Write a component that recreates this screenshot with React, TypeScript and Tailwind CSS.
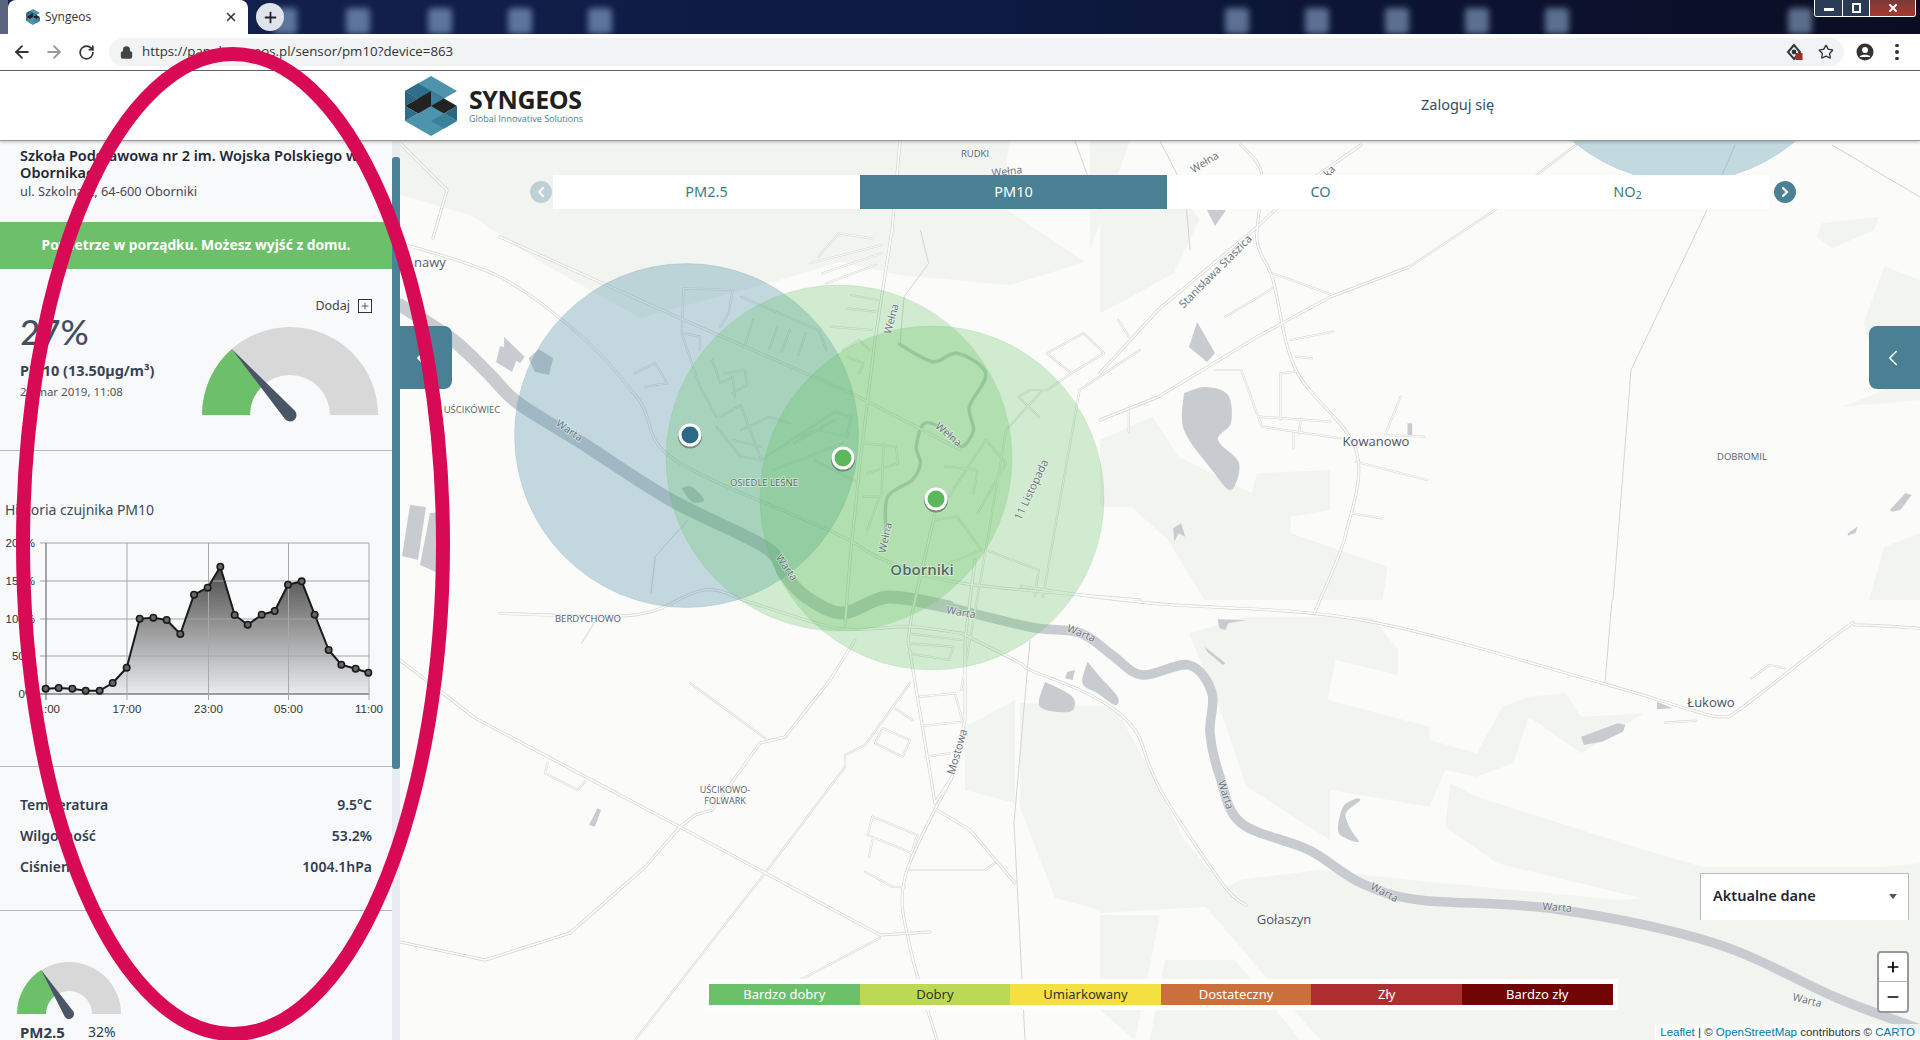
import React from "react";
import { ArrowLeft, ArrowRight, RotateCw, Lock, Star, Plus, X, ChevronLeft, ChevronRight, Minus } from "lucide-react";

type Z = (x: number, y: number) => [number, number];
const P: Z = (x, y) => [x, y];
const Z6: Z = (x, y) => [500 + x / 2.45, 230 + y / 3];
const Z10: Z = (x, y) => [400 + x / 2, 640 + y / 3];
const Z11: Z = (x, y) => [1100 + x / 1.912, 140 + y / 3];
const Z12: Z = (x, y) => [1100 + x / 1.912, 600 + y / 3];

function line(z: Z, n: number[], close = false) {
  let d = "";
  for (let i = 0; i < n.length; i += 2) {
    const [x, y] = z(n[i], n[i + 1]);
    d += (i ? "L" : "M") + x.toFixed(1) + " " + y.toFixed(1);
  }
  return d + (close ? "Z" : "");
}

function smooth(z: Z, n: number[]) {
  const p: [number, number][] = [];
  for (let i = 0; i < n.length; i += 2) p.push(z(n[i], n[i + 1]));
  let d = `M${p[0][0].toFixed(1)} ${p[0][1].toFixed(1)}`;
  for (let i = 0; i < p.length - 1; i++) {
    const a = p[Math.max(i - 1, 0)];
    const b = p[i];
    const c = p[i + 1];
    const e = p[Math.min(i + 2, p.length - 1)];
    const c1x = b[0] + (c[0] - a[0]) / 6;
    const c1y = b[1] + (c[1] - a[1]) / 6;
    const c2x = c[0] - (e[0] - b[0]) / 6;
    const c2y = c[1] - (e[1] - b[1]) / 6;
    d += `C${c1x.toFixed(1)} ${c1y.toFixed(1)} ${c2x.toFixed(1)} ${c2y.toFixed(1)} ${c[0].toFixed(1)} ${c[1].toFixed(1)}`;
  }
  return d;
}

const forests: string[] = [
  line(P, [400, 141, 1010, 141, 1000, 205, 1085, 262, 1010, 285, 900, 275, 840, 262, 780, 280, 640, 318, 540, 262, 470, 215, 400, 195], true),
  line(P, [1090, 141, 1130, 141, 1090, 250], true),
  line(P, [965, 727, 1015, 700, 1015, 803, 965, 790], true),
  line(P, [1020, 703, 1115, 707, 1150, 770, 1184, 840, 1240, 905, 1100, 913, 1100, 910, 1055, 898, 1020, 807], true),
  line(P, [1100, 915, 1160, 915, 1135, 1040, 1100, 1010], true),
  line(P, [1165, 960, 1235, 960, 1300, 1040, 1150, 1040], true),
  line(Z12, [280, 50, 520, 50, 570, 150, 570, 225, 450, 180, 435, 300, 630, 380, 630, 420, 720, 460, 770, 320, 820, 290, 890, 280, 920, 350, 1040, 340, 920, 460, 820, 350, 790, 490, 720, 530, 660, 510, 630, 620, 440, 570, 440, 720, 280, 560, 235, 350, 170, 100], true),
  line(Z12, [670, 550, 720, 590, 800, 630, 1000, 730, 1150, 800, 1500, 800, 1568, 790, 1568, 900, 1050, 900, 760, 790, 660, 680], true),
  line(P, [1320, 870, 1410, 880, 1620, 900, 1920, 880, 1920, 1040, 1320, 1040, 1200, 900, 1240, 880], true),
  line(Z11, [1500, 380, 1568, 420, 1568, 780, 1420, 800, 1500, 750, 1460, 550], true),
  line(Z11, [1380, 250, 1490, 230, 1480, 270, 1400, 325, 1370, 290], true),
  line(Z11, [1500, 1220, 1568, 1180, 1568, 1380, 1470, 1380], true),
  line(Z11, [0, 140, 130, 110, 190, 240, 140, 400, 60, 470, 0, 520], true),
  line(Z11, [0, 900, 100, 830, 150, 950, 290, 1060, 300, 1000, 440, 990, 440, 1110, 365, 1130, 365, 1180, 550, 1280, 540, 1380, 200, 1380, 130, 1200, 60, 1100, 0, 1100], true),
];

const water: string[] = [
  smooth(P, [1184, 393, 1205, 387, 1228, 395, 1231, 423, 1218, 440, 1239, 463, 1231, 490, 1212, 470, 1184, 430, 1184, 393]),
  line(P, [1197, 322, 1215, 353, 1207, 362, 1189, 347], true),
  line(P, [1207, 210, 1226, 210, 1215, 226], true),
  line(Z6, [70, 385, 95, 358, 130, 385, 120, 435, 85, 425], true),
  smooth(Z6, [445, 775, 470, 770, 500, 810, 470, 815, 445, 775]),
  line(P, [410, 505, 426, 507, 418, 560, 402, 556], true),
  line(P, [430, 513, 445, 512, 436, 572, 420, 565], true),
  line(P, [500, 346, 520, 352, 512, 372, 496, 362], true),
  smooth(Z10, [1290, 125, 1345, 170, 1340, 215, 1280, 200, 1290, 125]),
  smooth(Z10, [1375, 65, 1400, 110, 1435, 170, 1430, 195, 1395, 160, 1365, 130, 1375, 65]),
  line(Z10, [1335, 95, 1350, 90, 1345, 120, 1330, 115], true),
  line(Z10, [395, 505, 402, 510, 390, 560, 378, 555], true),
  line(Z12, [225, 58, 280, 60, 245, 70, 240, 90, 228, 85], true),
  line(Z12, [200, 140, 240, 190, 235, 195, 205, 155], true),
  smooth(Z12, [490, 595, 465, 620, 455, 690, 470, 715, 495, 725, 480, 690, 470, 640, 497, 602, 490, 595]),
  line(Z12, [920, 410, 990, 370, 1005, 375, 1000, 395, 960, 425, 925, 435], true),
  line(Z12, [1065, 305, 1095, 325, 1065, 328], true),
  line(Z11, [140, 1165, 155, 1150, 163, 1190, 150, 1180, 142, 1205], true),
  line(Z11, [1510, 1110, 1540, 1060, 1552, 1065, 1530, 1110, 1515, 1115], true),
  line(Z11, [1430, 1180, 1448, 1160, 1445, 1178, 1430, 1187], true),
  line(Z11, [588, 850, 597, 850, 597, 890, 588, 888], true),
  line(Z6, [10, 320, 60, 380, 50, 400, 10, 370], true),
];

const riverWest = smooth(P, [400, 305, 453, 340, 490, 375, 518, 403, 582, 443, 671, 500, 765, 547, 785, 575, 806, 597, 843, 613, 888, 597, 949, 607]);
const riverEast = smooth(P, [949, 607, 1030, 627, 1080, 633, 1112, 655, 1142, 675, 1189, 665, 1212, 693, 1210, 733, 1220, 777, 1241, 823, 1309, 850, 1361, 883, 1420, 900, 1555, 909, 1714, 943, 1837, 998, 1920, 1029]);
const wetna = smooth(Z6, [975, 340, 1060, 395, 1120, 370, 1190, 430, 1150, 530, 1160, 600, 1130, 650, 1090, 600, 1040, 580, 1020, 650, 1030, 700, 1010, 750, 950, 800, 945, 900]);

const major: string[] = [
  smooth(Z6, [0, 1150, 330, 1155, 500, 1080, 620, 1120, 830, 1195, 1000, 1190, 1130, 1210]),
  smooth(P, [961, 633, 1018, 662, 1030, 670, 1080, 690, 1115, 710, 1137, 733, 1150, 767, 1168, 803, 1225, 887, 1246, 905]),
  smooth(Z12, [-150, -40, 100, 10, 500, 60, 960, 250, 1130, 330, 1190, 350, 1230, 320, 1420, 90, 1450, 75, 1568, 85]),
  line(P, [892, 230, 875, 340, 860, 463, 850, 560, 845, 625]),
  line(P, [900, 141, 892, 230]),
  line(P, [935, 513, 912, 613, 908, 640, 935, 803, 952, 777, 965, 720, 965, 640, 975, 560]),
  smooth(P, [952, 777, 905, 877, 910, 947, 937, 1040]),
  line(P, [500, 237, 684, 320, 851, 393, 961, 450]),
  smooth(P, [400, 243, 500, 277, 582, 337, 639, 400, 675, 460, 835, 533, 884, 560, 961, 583, 1140, 600]),
  line(P, [400, 660, 475, 718, 680, 827, 880, 935, 930, 932]),
  line(P, [400, 942, 485, 960, 570, 933, 645, 867, 680, 827, 695, 815, 712, 810, 760, 743, 785, 737, 830, 680, 855, 640]),
  line(P, [1100, 373, 1158, 310, 1257, 227, 1296, 190, 1361, 145]),
  smooth(P, [1241, 145, 1262, 175, 1257, 240, 1273, 280, 1296, 370, 1356, 450, 1346, 533, 1320, 600, 1314, 613]),
  line(P, [1100, 420, 1158, 397, 1257, 337, 1330, 297, 1409, 267]),
  line(P, [937, 810, 970, 830, 1015, 883]),
  line(P, [400, 143, 447, 190, 433, 238]),
];

const minor: string[] = [
  line(P, [1409, 267, 1495, 210, 1539, 173, 1576, 145]),
  line(P, [690, 683, 765, 738]),
  line(P, [635, 1040, 765, 873, 845, 767, 845, 755, 865, 745, 910, 683]),
  line(P, [800, 980, 880, 938]),
  line(P, [910, 870, 985, 870, 995, 863]),
  line(Z10, [295, 370, 290, 400, 355, 450, 370, 425]),
  line(Z10, [945, 530, 935, 585, 1025, 640]),
  line(Z10, [945, 530, 1035, 585, 1020, 650]),
  line(Z10, [945, 600, 938, 650]),
  line(Z10, [930, 695, 985, 740, 1010, 742]),
  line(Z10, [1040, 170, 1110, 160, 1125, 245, 1045, 258]),
  line(Z10, [1050, 350, 1100, 340]),
  line(Z10, [965, 265, 1020, 300, 1005, 350, 950, 310, 965, 265]),
  line(Z10, [985, 200, 1025, 240]),
  line(Z11, [330, 400, 445, 465]),
  line(Z11, [240, 530, 330, 445]),
  line(Z11, [365, 600, 445, 575]),
  line(Z11, [375, 650, 405, 655]),
  line(Z11, [220, 690, 270, 690, 300, 820, 310, 860, 460, 895]),
  line(Z11, [345, 840, 345, 700, 375, 695]),
  line(Z11, [305, 830, 440, 845]),
  line(Z11, [385, 835, 380, 880]),
  line(Z11, [490, 965, 625, 1020]),
  line(Z11, [480, 1120, 540, 1135]),
  line(Z11, [575, 770, 545, 885]),
  line(Z11, [545, 885, 620, 890]),
  line(Z11, [35, 540, 55, 590]),
  line(Z11, [55, 810, 55, 875]),
  line(Z11, [370, 880, 370, 925]),
  line(Z12, [1080, 368, 1140, 362]),
  line(Z12, [1245, 235, 1280, 195, 1310, 205]),
  line(Z6, [450, 175, 570, 180, 560, 250, 540, 290]),
  line(Z6, [450, 175, 445, 310, 490, 470, 530, 560]),
  line(Z6, [590, 200, 780, 300, 800, 360]),
  line(Z6, [450, 310, 490, 320, 490, 360]),
  line(Z6, [330, 430, 380, 400, 410, 460, 355, 470]),
  line(Z6, [520, 390, 540, 460, 570, 440, 575, 500]),
  line(Z6, [550, 430, 600, 420, 605, 465, 570, 490]),
  line(Z6, [620, 270, 600, 345]),
  line(Z6, [680, 290, 660, 355]),
  line(Z6, [710, 300, 690, 365]),
  line(Z6, [750, 310, 730, 375]),
  line(Z6, [540, 560, 590, 525, 640, 690, 590, 680, 530, 590]),
  line(Z6, [590, 600, 660, 560, 710, 580]),
  line(Z6, [570, 630, 640, 650]),
  line(Z6, [640, 690, 820, 545, 860, 560, 850, 620, 780, 600, 730, 620]),
  line(Z6, [720, 640, 820, 570]),
  line(Z6, [670, 720, 840, 640]),
  line(Z6, [770, 690, 880, 760]),
  line(Z6, [760, 100, 935, 45]),
  line(Z6, [790, 130, 935, 70]),
  line(Z6, [780, 80, 830, 10, 910, 25]),
  line(Z6, [800, 160, 920, 105]),
  line(Z6, [860, 195, 925, 210]),
  line(Z6, [850, 235, 920, 245]),
  line(Z6, [810, 290, 910, 300]),
  line(Z6, [840, 360, 880, 330, 905, 360]),
  line(Z6, [850, 380, 890, 400, 880, 430]),
  line(Z6, [890, 640, 970, 650, 975, 700, 900, 730]),
  line(Z6, [940, 640, 935, 790]),
  line(Z6, [890, 800, 930, 800, 900, 900]),
  line(Z6, [1090, 710, 1170, 720, 1160, 790]),
  line(Z6, [1100, 800, 1190, 630, 1240, 700, 1170, 850]),
  line(Z6, [1060, 870, 1120, 860, 1180, 960, 1100, 1000]),
  line(Z6, [1340, 370, 1430, 310, 1480, 370, 1400, 430, 1340, 370]),
  line(Z6, [1400, 430, 1340, 480, 1300, 480, 1270, 500, 1320, 560]),
  line(Z6, [1000, 1210, 1130, 1230]),
  line(Z6, [1000, 1240, 1110, 1250, 1100, 1290, 1000, 1270]),
  line(Z6, [1190, 960, 1320, 1020, 1310, 1100]),
  line(Z6, [1330, 480, 1240, 600, 1190, 960, 1130, 1380]),
  line(Z6, [1420, 480, 1568, 360]),
  line(Z6, [1420, 480, 1330, 1100]),
];

const thin: string[] = [
  line(P, [1613, 600, 1631, 370, 1707, 210, 1735, 145]),
  line(P, [1612, 600, 1605, 683]),
  line(P, [1832, 145, 1920, 197]),
  line(P, [1030, 640, 1014, 823, 1025, 1040]),
  line(Z6, [370, 1090, 380, 980, 460, 870]),
  line(Z6, [200, 1240, 240, 1160]),
  line(Z6, [980, 340, 990, 200, 1050, 100, 1030, 0]),
  line(P, [1075, 141, 1100, 210]),
  line(P, [1160, 141, 1185, 190, 1190, 250]),
];

type L = { t: string; x: number; y: number; r?: number; s?: number; c?: string; w?: number };
const labels: L[] = [
  { t: "Warta", x: 569, y: 431, r: 35 },
  { t: "Warta", x: 786, y: 568, r: 55 },
  { t: "Warta", x: 961, y: 613, r: 10 },
  { t: "Warta", x: 1081, y: 634, r: 22 },
  { t: "Warta", x: 1225, y: 795, r: 72 },
  { t: "Warta", x: 1384, y: 893, r: 28 },
  { t: "Warta", x: 1557, y: 908, r: 4 },
  { t: "Warta", x: 1807, y: 1001, r: 14 },
  { t: "Wełna", x: 892, y: 319, r: -75 },
  { t: "Wełna", x: 948, y: 435, r: 40 },
  { t: "Wełna", x: 886, y: 538, r: -78 },
  { t: "Wełna", x: 1007, y: 172, r: -6 },
  { t: "Wełna", x: 1205, y: 163, r: -32 },
  { t: "ka", x: 1330, y: 172, r: -45 },
  { t: "Stanisława Staszica", x: 1216, y: 272, r: -45, s: 11 },
  { t: "11 Listopada", x: 1032, y: 490, r: -65, s: 11 },
  { t: "Mostowa", x: 958, y: 752, r: -74, s: 11 },
  { t: "Oborniki", x: 922, y: 571, s: 15, c: "#4f6a62", w: 600 },
  { t: "Kowanowo", x: 1376, y: 443, s: 13, c: "#4a5563" },
  { t: "Łukowo", x: 1711, y: 704, s: 13, c: "#4a5563" },
  { t: "Gołaszyn", x: 1284, y: 921, s: 13, c: "#4a5563" },
  { t: "DOBROMIL", x: 1742, y: 457, s: 9.5, c: "#55606e" },
  { t: "BERDYCHOWO", x: 588, y: 619, s: 9.5, c: "#55606e" },
  { t: "OSIEDLE LEŚNE", x: 764, y: 483, s: 9.5, c: "#4f6a62" },
  { t: "UŚCIKÓWIEC", x: 472, y: 410, s: 9.5, c: "#55606e" },
  { t: "UŚCIKOWO-", x: 725, y: 791, s: 9, c: "#55606e" },
  { t: "FOLWARK", x: 725, y: 802, s: 9, c: "#55606e" },
  { t: "RUDKI", x: 975, y: 154, s: 9.5, c: "#55606e" },
  { t: "nawy", x: 430, y: 264, s: 13, c: "#555f6b" },
];

function MapCanvas() {
  return (
    <svg className="absolute inset-0 w-full h-full" viewBox="400 141 1520 899" preserveAspectRatio="none">
      <rect x="400" y="141" width="1520" height="899" fill="#fbfbfa" />
      {forests.map((d, i) => <path key={i} d={d} fill="#f2f4f0" />)}
      {water.map((d, i) => <path key={i} d={d} fill="#c8ccd1" />)}
      <path d={riverWest} fill="none" stroke="#c8ccd1" strokeWidth="13" strokeLinecap="round" />
      <path d={riverEast} fill="none" stroke="#c8ccd1" strokeWidth="9.5" strokeLinecap="round" />
      <path d={wetna} fill="none" stroke="#c8ccd1" strokeWidth="3.5" />
      <g fill="none" stroke="#d4d5d4" strokeWidth="1" strokeLinejoin="round">
        {thin.map((d, i) => <path key={i} d={d} />)}
      </g>
      <g fill="none" stroke="#d3d4d3" strokeWidth="3" strokeLinejoin="round" strokeLinecap="round">
        {major.map((d, i) => <path key={i} d={d} />)}
      </g>
      <g fill="none" stroke="#d9dad9" strokeWidth="2.2" strokeLinejoin="round" strokeLinecap="round">
        {minor.map((d, i) => <path key={i} d={d} />)}
      </g>
      <g fill="none" stroke="#fcfcfb" strokeWidth="1.7" strokeLinejoin="round" strokeLinecap="round">
        {major.map((d, i) => <path key={i} d={d} />)}
      </g>
      <g fill="none" stroke="#fcfcfb" strokeWidth="1" strokeLinejoin="round" strokeLinecap="round">
        {minor.map((d, i) => <path key={i} d={d} />)}
      </g>
      <circle cx="1684" cy="10" r="172" fill="#4a93a8" fillOpacity="0.32" stroke="#4a93a8" strokeOpacity="0.15" />
      <circle cx="686.5" cy="435.5" r="172" fill="#4a8fa5" fillOpacity="0.32" stroke="#3f7f96" strokeOpacity="0.15" />
      <circle cx="839" cy="458" r="173" fill="#62c360" fillOpacity="0.28" stroke="#5fbb5d" strokeOpacity="0.15" />
      <circle cx="932" cy="498" r="172" fill="#62c360" fillOpacity="0.28" stroke="#5fbb5d" strokeOpacity="0.15" />
      <g fontFamily="'Open Sans', sans-serif" textAnchor="middle" dominantBaseline="middle">
        {labels.map((l, i) => (
          <text
            key={i}
            x={l.x}
            y={l.y}
            fontSize={l.s ?? 10.5}
            fill={l.c ?? "#65707c"}
            fontWeight={l.w ?? 400}
            transform={l.r ? `rotate(${l.r} ${l.x} ${l.y})` : undefined}
            stroke="#fbfbf9"
            strokeOpacity="0.6"
            strokeWidth="1.5"
            paintOrder="stroke"
          >
            {l.t}
          </text>
        ))}
      </g>
      {[
        [690, 435, "#2b6a85"],
        [843, 458, "#5cb85a"],
        [936, 499, "#5cb85a"],
      ].map(([x, y, c], i) => (
        <g key={i}>
          <circle cx={x as number} cy={(y as number) + 1.5} r="12" fill="#333" fillOpacity="0.45" />
          <circle cx={x as number} cy={y as number} r="11.5" fill="#fff" />
          <circle cx={x as number} cy={y as number} r="8.5" fill={c as string} />
        </g>
      ))}
    </svg>
  );
}

function Gauge({ w, h, r, inner, pct, stem }: { w: number; h: number; r: number; inner: number; pct: number; stem: number }) {
  const a = Math.PI * (pct / 100);
  const cx = r;
  const cy = r;
  const ox = cx - r * Math.cos(a);
  const oy = cy - r * Math.sin(a);
  const ix = cx - inner * Math.cos(a);
  const iy = cy - inner * Math.sin(a);
  const nx = Math.sin(a) * stem;
  const ny = -Math.cos(a) * stem;
  return (
    <svg width={w} height={h} viewBox={`0 0 ${w} ${h}`} className="block overflow-visible">
      <path d={`M0 ${cy}A${r} ${r} 0 0 1 ${2 * r} ${cy}L${cx + inner} ${cy}A${inner} ${inner} 0 0 0 ${cx - inner} ${cy}Z`} fill="#d8d8d8" />
      <path d={`M0 ${cy}A${r} ${r} 0 0 1 ${ox} ${oy}L${ix} ${iy}A${inner} ${inner} 0 0 0 ${cx - inner} ${cy}Z`} fill="#6cc06a" />
      <path d={`M${ox} ${oy}L${cx + nx} ${cy + ny}A${stem} ${stem} 0 1 1 ${cx - nx} ${cy - ny}Z`} fill="#4a5568" />
    </svg>
  );
}

const pts = [[137,626],[176,624],[217,626],[257,632],[299,632],[338,609],[380,563],[419,416],[460,413],[500,420],[541,462],[582,344],[623,323],[661,260],[704,405],[743,434],[785,404],[824,393],[864,314],[905,304],[944,404],[986,510],[1024,554],[1067,566],[1105,578]].map(([x, y]) => [x / 3, y / 3 - 63 + 20]);

function HistoryChart() {
  const top = 20;
  const ys = [20, 58, 96, 133, 171];
  const xs = [46, 127, 208.5, 288.5, 369];
  const d = pts.map((p, i) => (i ? "L" : "M") + p[0].toFixed(1) + " " + p[1].toFixed(1)).join("");
  const area = d + `L369 171L46 171Z`;
  const yl = ["200%", "150%", "100%", "50%", "0%"];
  const xl = ["11:00", "17:00", "23:00", "05:00", "11:00"];
  return (
    <svg width="392" height="205" viewBox="0 0 392 205" className="block">
      <defs>
        <linearGradient id="hist" x1="0" y1="0" x2="0" y2="1">
          <stop offset="0" stopColor="#4a4a4a" />
          <stop offset="1" stopColor="#4a4a4a" stopOpacity="0.08" />
        </linearGradient>
      </defs>
      <path d={area} fill="url(#hist)" />
      {ys.map((y, i) => <line key={i} x1="40" x2="369" y1={y} y2={y} stroke={i === 4 ? "#444" : "#a5a5a5"} strokeWidth="1" />)}
      {xs.map((x, i) => <line key={i} x1={x} x2={x} y1={top} y2="177" stroke={i === 0 ? "#555" : "#a9a9a9"} strokeWidth="1" />)}
      <path d={d} fill="none" stroke="#1a1a1a" strokeWidth="2" strokeLinejoin="round" />
      {pts.map((p, i) => <circle key={i} cx={p[0]} cy={p[1]} r="3.2" fill="#666" stroke="#1a1a1a" strokeWidth="1.6" />)}
      <g fontFamily="'Liberation Sans', sans-serif" fontSize="11.5" fill="#333">
        {yl.map((t, i) => <text key={i} x="35" y={ys[i] + 4} textAnchor="end">{t}</text>)}
        {xl.map((t, i) => <text key={i} x={xs[i]} y="190" textAnchor="middle">{t}</text>)}
      </g>
    </svg>
  );
}

function Logo({ className }: { className?: string }) {
  return (
    <svg viewBox="0 0 52 60" className={className}>
      <polygon points="26,0 52,15 26,30 0,15" fill="#4d93ab" />
      <polygon points="0,15 13,7.5 26,15 13,22.5" fill="#2f6d8a" />
      <polygon points="0,15 13,22.5 0,30" fill="#2c6580" />
      <polygon points="0,30 26,15 52,30 26,45" fill="#222" />
      <polygon points="26,15 39,22.5 26,30" fill="#3c7f9a" />
      <polygon points="52,30 52,45 39,37.5" fill="#2c6580" />
      <polygon points="0,45 26,30 52,45 26,60" fill="#4d93ab" />
      <polygon points="26,45 39,37.5 52,45 39,52.5" fill="#3c7f9a" />
      <polygon points="0,30 13,37.5 0,45" fill="#2f6d8a" />
    </svg>
  );
}

function TabStrip() {
  const tiles = [285, 358, 440, 520, 600, 1237, 1317, 1397, 1477, 1557, 1800];
  return (
    <div className="relative h-[34px] shrink-0 overflow-hidden bg-[#0d1330] flex items-end">
      <div className="absolute inset-0 bg-gradient-to-r from-[#13224f] via-[#0d1a42] to-[#0a0d22]" />
      {tiles.map((x) => (
        <div key={x} className="absolute top-[8px] w-[24px] h-[26px] rounded-sm bg-[#9dbbe0] opacity-55 blur-[3px]" style={{ left: x - 12 }} />
      ))}
      <div className="relative w-[8px] h-full bg-[#59647e]" />
      <div className="relative w-[240px] h-full bg-white rounded-t-lg flex items-center pl-[18px] pr-[10px]">
        <Logo className="w-[14px] h-[16px]" />
        <span className="ml-[4px] pl-[1px] text-[12px] text-[#333] font-['Open_Sans',sans-serif] flex-1">Syngeos</span>
        <X size={14} strokeWidth={2.5} className="text-[#333]" />
      </div>
      <div className="relative ml-[8px] mb-[3px] w-[28px] h-[28px] rounded-full bg-[#dfe3ec] flex items-center justify-center">
        <Plus size={17} strokeWidth={2.5} className="text-[#222]" />
      </div>
      <div className="absolute right-[4px] top-0 w-[102px] h-[17px] flex border border-t-0 border-white rounded-b-[3px] overflow-hidden">
        <div className="w-[28px] h-full bg-[#2b3a55] border-r border-white flex items-center justify-center">
          <div className="w-[10px] h-[3px] bg-white mt-[3px]" />
        </div>
        <div className="w-[27px] h-full bg-[#2b3a55] border-r border-white flex items-center justify-center">
          <div className="w-[9px] h-[10px] border-2 border-white" />
        </div>
        <div className="flex-1 h-full bg-gradient-to-b from-[#7a3a36] to-[#a8382c] flex items-center justify-center">
          <X size={12} strokeWidth={4} className="text-white" />
        </div>
      </div>
    </div>
  );
}

function Toolbar() {
  return (
    <div className="h-[37px] shrink-0 bg-white border-b border-[#666] flex items-center pl-[12px] pr-[12px]">
      <ArrowLeft size={20} strokeWidth={2.2} className="text-[#333]" />
      <ArrowRight size={20} strokeWidth={2.2} className="text-[#999] ml-[12px]" />
      <RotateCw size={17} strokeWidth={2.4} className="text-[#333] ml-[14px]" />
      <div className="ml-[14px] w-[1735px] h-[28px] rounded-full bg-[#f1f3f4] flex items-center pl-[11px] pr-[10px]">
        <Lock size={13} strokeWidth={3} fill="#444" className="text-[#444]" />
        <span className="ml-[9px] flex-1 text-[13.3px] text-[#333] font-['Open_Sans',sans-serif]">https://panel.syngeos.pl/sensor/pm10?device=863</span>
        <svg width="18" height="18" viewBox="0 0 18 18" className="mr-[14px]">
          <path d="M8 2 L2 9 L8 16 L14 9Z" fill="none" stroke="#333" strokeWidth="2" />
          <circle cx="8" cy="9" r="2.4" fill="#333" />
          <rect x="9.5" y="10" width="7" height="7" fill="#a12a2a" />
        </svg>
        <Star size={16} strokeWidth={2} className="text-[#333]" />
      </div>
      <svg width="18" height="18" viewBox="0 0 18 18" className="ml-[12px]">
        <circle cx="9" cy="9" r="8.5" fill="#333" />
        <circle cx="9" cy="7" r="3" fill="#fff" />
        <path d="M3.8 13.5 C5 11 13 11 14.2 13.5 L14.2 14 L3.8 14Z" fill="#fff" />
      </svg>
      <div className="ml-[21px] flex flex-col gap-[3px]">
        <span className="block w-[3.5px] h-[3.5px] rounded-full bg-[#333]" />
        <span className="block w-[3.5px] h-[3.5px] rounded-full bg-[#333]" />
        <span className="block w-[3.5px] h-[3.5px] rounded-full bg-[#333]" />
      </div>
    </div>
  );
}

function Header() {
  return (
    <div className="relative z-20 h-[70px] shrink-0 bg-white border-b border-[#999] shadow-[0_1px_3px_rgba(0,0,0,0.25)] flex items-center">
      <div className="ml-[405px] w-[52px] h-[60px]"><Logo className="w-[52px] h-[60px]" /></div>
      <div className="ml-[12px] w-[120px]">
        <div className="text-[25px] leading-[22px] font-bold text-[#1f1f1f] font-['Open_Sans',sans-serif] tracking-[-0.4px]">SYNGEOS</div>
        <div className="text-[9px] leading-[10px] text-[#3f7d8d] font-['Open_Sans',sans-serif] mt-[4px]">Global Innovative Solutions</div>
      </div>
      <div className="ml-[832px] mb-[4px] text-[14.5px] leading-[20px] text-[#2f4f5f] font-['Noto_Sans',sans-serif]">Zaloguj się</div>
    </div>
  );
}

function Sidebar() {
  return (
    <div className="relative w-[400px] shrink-0 flex bg-[#f8f9fb] font-['Noto_Sans',sans-serif] text-[#333d4d]">
      <div className="w-[392px] overflow-hidden">
        <section className="h-[81px] pl-[20px] pr-[16px] pt-[6px]">
          <h1 className="text-[14.5px] leading-[17px] font-semibold text-[#1f2733]">Szkoła Podstawowa nr 2 im. Wojska Polskiego w Obornikach</h1>
          <p className="mt-[1px] text-[12.75px] leading-[18px] text-[#3f4a5a]">ul. Szkolna 2, 64-600 Oborniki</p>
        </section>
        <div className="h-[47px] bg-[#6cc06a] flex items-center justify-center text-white text-[13.8px] font-bold">Powietrze w porządku. Możesz wyjść z domu.</div>
        <section className="relative h-[182px] border-b border-[#bbb] pl-[20px] pt-[44px]">
          <div className="absolute right-[20px] top-[28px] flex items-center text-[12.5px] text-[#444]">
            Dodaj
            <span className="ml-[8px] w-[14px] h-[14px] border border-[#333] flex items-center justify-center"><Plus size={10} strokeWidth={2} /></span>
          </div>
          <div className="text-[35px] leading-[36px] font-medium font-['Lato',sans-serif] text-[#434e5f]">27%</div>
          <div className="mt-[10.5px] text-[14.5px] leading-[20px] font-bold text-[#3a4454]">PM10 (13.50µg/m³)</div>
          <div className="mt-[2px] text-[11.5px] leading-[20px] text-[#555]">21 mar 2019, 11:08</div>
          <div className="absolute left-[202px] top-[58px]">
            <Gauge w={176} h={96} r={88} inner={40} pct={27} stem={6.5} />
          </div>
        </section>
        <section className="h-[316px] border-b border-[#bbb] relative">
          <div className="absolute left-[5px] top-[49px] text-[14px] leading-[20px] text-[#3f4a5a]">Historia czujnika PM10</div>
          <div className="pt-[72px]"><HistoryChart /></div>
        </section>
        <section className="h-[144px] pl-[20px] pr-[20px] pt-[28px] flex flex-col gap-[11px] border-b border-[#bbb] text-[14px] leading-[20px] font-semibold">
          <div className="flex justify-between"><span>Temperatura</span><span>9.5°C</span></div>
          <div className="flex justify-between"><span>Wilgotność</span><span>53.2%</span></div>
          <div className="flex justify-between"><span>Ciśnienie</span><span>1004.1hPa</span></div>
        </section>
        <section className="relative pl-[17px] pt-[51px]">
          <Gauge w={104} h={58} r={52} inner={23} pct={32} stem={5} />
          <div className="flex items-center pl-[3px] mt-[2px]">
            <span className="text-[15px] leading-[20px] font-bold w-[68px]">PM2.5</span>
            <span className="text-[14px] leading-[20px]">32%</span>
          </div>
        </section>
      </div>
      <div className="w-[8px] bg-[#e9ebf3] pt-[16px]">
        <div className="h-[612px] rounded-[3px] bg-[#4a8398]" />
      </div>
    </div>
  );
}

const legend = [
  ["Bardzo dobry", "bg-[#6cc06a] text-white"],
  ["Dobry", "bg-[#bcd955] text-[#333]"],
  ["Umiarkowany", "bg-[#f4e041] text-[#333]"],
  ["Dostateczny", "bg-[#c9703c] text-white"],
  ["Zły", "bg-[#ad2e2e] text-white"],
  ["Bardzo zły", "bg-[#700505] text-white"],
];

const tabs = ["PM2.5", "PM10", "CO"];

function MapPane() {
  return (
    <div className="relative flex-1 overflow-hidden font-['Noto_Sans',sans-serif]">
      <MapCanvas />
      <button className="absolute left-0 top-[185px] w-[52px] h-[63px] rounded-r-lg bg-[#4a8093] flex items-center pl-[10px] text-white">
        <ChevronLeft size={22} strokeWidth={2.5} />
      </button>
      <div className="absolute right-0 top-[185px] w-[51px] h-[63px] rounded-l-lg bg-[#4a8093] flex items-center pl-[11px] text-white">
        <ChevronLeft size={26} strokeWidth={1.4} />
      </div>
      <div className="absolute left-[130px] top-[34px] flex items-center">
        <span className="w-[22px] h-[22px] rounded-full bg-[#4a8093] opacity-30 flex items-center justify-center text-white"><ChevronLeft size={16} strokeWidth={3.5} /></span>
        <div className="ml-[1px] w-[1216px] h-[34px] overflow-hidden flex bg-white">
          {tabs.map((t) => (
            <div key={t} className={t === "PM10" ? "w-[307px] shrink-0 bg-[#4a8093] text-white text-[14.5px] flex items-center justify-center" : "w-[307px] shrink-0 text-[#3a7a85] text-[14.5px] flex items-center justify-center"}>{t}</div>
          ))}
          <div className="w-[307px] shrink-0 text-[#3a7a85] text-[14.5px] flex items-center justify-center">NO<sub className="text-[11px] leading-none">2</sub></div>
        </div>
        <span className="ml-[5px] w-[22px] h-[22px] rounded-full bg-[#4a8093] flex items-center justify-center text-white"><ChevronRight size={16} strokeWidth={3.5} /></span>
      </div>
      <div className="absolute left-[304px] bottom-[30px] flex bg-white p-[5px]">
        {legend.map(([t, c]) => (
          <div key={t} className={`w-[150.6px] h-[21px] flex items-center justify-center text-[13px] ${c}`}>{t}</div>
        ))}
      </div>
      <div className="absolute right-[11px] bottom-[120px] w-[209px] h-[47px] bg-white border border-b-0 border-[#bbb] flex items-center justify-between pl-[12px] pr-[11px] pb-[2px]">
        <span className="text-[14.5px] font-semibold text-[#1f2733]">Aktualne dane</span>
        <span className="w-0 h-0 border-x-[4px] border-x-transparent border-t-[5px] border-t-[#555]" />
      </div>
      <div className="absolute right-[11px] bottom-[27px] w-[32px] h-[62px] bg-white rounded-[4px] border-2 border-[#999] flex flex-col">
        <div className="h-[29px] flex items-center justify-center border-b border-[#bbb]"><Plus size={16} strokeWidth={2.6} className="text-black" /></div>
        <div className="flex-1 flex items-center justify-center"><Minus size={16} strokeWidth={2.6} className="text-black" /></div>
      </div>
      <div className="absolute right-0 bottom-0 h-[16px] pl-[5px] pr-[5px] bg-white/70 text-[11.5px] leading-[16px] font-['Liberation_Sans',sans-serif] text-[#333]">
        <span className="text-[#0078a8]">Leaflet</span> | © <span className="text-[#0078a8]">OpenStreetMap</span> contributors © <span className="text-[#0078a8]">CARTO</span>
      </div>
    </div>
  );
}

export default function App() {
  return (
    <div className="relative w-[1920px] h-[1040px] overflow-hidden flex flex-col bg-white">
      <TabStrip />
      <Toolbar />
      <Header />
      <div className="flex flex-1 min-h-0">
        <Sidebar />
        <MapPane />
      </div>
      <svg className="absolute left-0 top-0 z-30 pointer-events-none" width="500" height="1040" viewBox="0 0 500 1040">
        <ellipse cx="233" cy="544" rx="210" ry="490" fill="none" stroke="#d90a55" strokeWidth="14" />
      </svg>
    </div>
  );
}
